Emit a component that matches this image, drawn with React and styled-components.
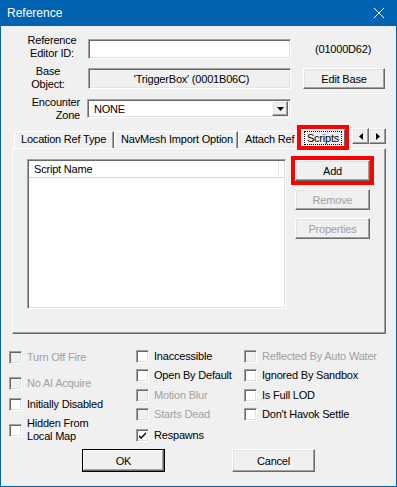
import React from 'react'
import styled, { createGlobalStyle } from 'styled-components'

const GlobalStyle = createGlobalStyle`
    html, body { margin: 0; padding: 0; background: #f0f0f0; }
    * { box-sizing: border-box; }
`

const BLUE = '#0063b1'

const Window = styled.div`
    width: 397px;
    height: 487px;
    display: flex;
    flex-direction: column;
    background: #f0f0f0;
    font-family: "Liberation Sans", Arial, sans-serif;
    font-size: 11px;
    letter-spacing: -0.2px;
    color: #000;
`

const TitleBar = styled.div`
    height: 26px;
    flex: none;
    background: ${ BLUE };
    color: #fff;
    display: flex;
    align-items: center;
    justify-content: space-between;
    padding: 0 13px 0 7px;
    font-size: 12px;
    letter-spacing: 0;
`

const Body = styled.div`
    flex: 1;
    display: flex;
    flex-direction: column;
    border: 1px solid ${ BLUE };
    border-top: 0;
    padding-top: 8px;
`

const FieldRow = styled.div`
    display: flex;
    align-items: flex-start;
    height: 26px;
    margin-top: ${ p => p.$gap || 0 }px;
`

const FieldLabel = styled.div`
    width: 64px;
    margin-left: ${ p => p.$left }px;
    text-align: ${ p => p.$align };
    line-height: 13px;
    white-space: pre-line;
`

const sunken = `
    border: 1px solid;
    border-color: #a0a0a0 #fff #fff #a0a0a0;
    box-shadow: inset 1px 1px #696969, inset -1px -1px #e3e3e3;
`

const raised = `
    border: 1px solid;
    border-color: #fff #696969 #696969 #fff;
    box-shadow: inset -1px -1px #a0a0a0, inset 1px 1px #e3e3e3;
    background: #f0f0f0;
`

const TextBox = styled.div`
    ${ sunken }
    width: ${ p => p.$w }px;
    height: ${ p => p.$h }px;
    margin-left: ${ p => p.$left }px;
    margin-top: ${ p => p.$top }px;
    background: ${ p => p.$disabled ? '#f0f0f0' : '#fff' };
    display: flex;
    align-items: center;
    justify-content: ${ p => p.$center ? 'center' : 'space-between' };
    padding: 0 2px 0 6px;
`

const IdText = styled.div`
    margin-left: 24px;
    margin-top: 5px;
    line-height: 20px;
`

const Button = styled.button`
    ${ raised }
    ${ p => p.$default && `
        border-color: #000;
        box-shadow: inset -1px -1px #696969, inset 1px 1px #fff, inset -2px -2px #a0a0a0;
    ` }
    width: ${ p => p.$w }px;
    height: ${ p => p.$h }px;
    margin-left: ${ p => p.$left || 0 }px;
    margin-top: ${ p => p.$top || 0 }px;
    padding: 0;
    font: inherit;
    letter-spacing: inherit;
    color: ${ p => p.disabled ? '#a0a0a0' : '#000' };
    flex: none;
`

const DropButton = styled.div`
    ${ raised }
    width: 16px;
    height: 15px;
    display: flex;
    align-items: center;
    justify-content: center;
`

const TabStrip = styled.div`
    display: flex;
    align-items: flex-end;
    height: 23px;
    margin-top: 3px;
    margin-left: 13px;
`

const Tab = styled.div`
    width: ${ p => p.$w }px;
    height: 17px;
    padding-left: 6px;
    border-top: 1px solid #fff;
    border-left: 1px solid #fff;
    border-right: ${ p => p.$clipped ? '0' : '1px solid #696969' };
    box-shadow: ${ p => p.$clipped ? 'none' : 'inset -1px 0 #a0a0a0' };
    line-height: 15px;
    white-space: nowrap;
    overflow: hidden;
`

const RedFrame = styled.div`
    border: 4px solid #f00;
    flex: none;
`

const ScriptsFrame = styled(RedFrame)`
    position: relative;
    z-index: 1;
    width: 52px;
    height: 25px;
    margin-bottom: -2px;
`

const ActiveTab = styled.div`
    height: 17px;
    background: #f0f0f0;
    border-top: 1px solid #fff;
    border-left: 1px solid #fff;
    border-right: 1px solid #696969;
    display: flex;
    justify-content: center;
    padding-top: 1px;
`

const FocusText = styled.span`
    border: 1px dotted #000;
    padding: 0 2px;
    line-height: 12px;
    height: 14px;
`

const Arrows = styled.div`
    display: flex;
    align-self: flex-start;
    margin-top: 3px;
    margin-left: 3px;
`

const ArrowButton = styled.div`
    ${ raised }
    width: 17px;
    height: 16px;
    display: flex;
    align-items: center;
    justify-content: center;
`

const Panel = styled.div`
    width: 374px;
    height: 186px;
    margin-left: 11px;
    border: 1px solid;
    border-color: #fff #696969 #696969 #fff;
    box-shadow: inset -1px -1px #a0a0a0;
    display: flex;
    align-items: flex-start;
`

const ListView = styled.div`
    ${ sunken }
    width: 259px;
    height: 150px;
    margin-left: 14px;
    margin-top: 10px;
    padding: 1px 1px 0 1px;
    background: #fff;
`

const ListHeader = styled.div`
    display: flex;
    height: 17px;
    border-bottom: 1px solid #d5d5d5;
`

const HeaderCell = styled.div`
    width: ${ p => p.$w }px;
    padding-left: 5px;
    line-height: 16px;
    border-right: 1px solid #e5e5e5;
`

const ButtonColumn = styled.div`
    width: 83px;
    margin-left: 5px;
    margin-top: 7px;
    display: flex;
    flex-direction: column;
    align-items: center;
`

const Checks = styled.div`
    display: flex;
    align-items: flex-start;
    margin-top: 16px;
`

const CheckColumn = styled.div`
    display: flex;
    flex-direction: column;
    width: ${ p => p.$w }px;
    margin-left: ${ p => p.$left || 0 }px;
    margin-top: ${ p => p.$top || 0 }px;
`

const CheckItem = styled.div`
    display: flex;
    align-items: center;
    margin-top: ${ p => p.$top }px;
    color: ${ p => p.$disabled ? '#a0a0a0' : '#000' };
`

const Box = styled.span`
    ${ sunken }
    width: 13px;
    height: 13px;
    flex: none;
    margin-right: 5px;
    background: ${ p => p.$disabled ? '#f0f0f0' : '#fff' };
    display: flex;
    align-items: center;
    justify-content: center;
`

const CheckLabel = styled.span`
    line-height: 13px;
    white-space: pre-line;
`

const Footer = styled.div`
    display: flex;
    gap: 67px;
    padding-left: 81px;
    margin-top: 6px;
`

const Check = ({ label, top = 0, disabled, checked }) => (
    <CheckItem $top={ top } $disabled={ disabled }>
        <Box $disabled={ disabled }>
            { checked && (
                <svg width="9" height="9" viewBox="0 0 9 9">
                    <path d="M1 4 L3 6 L8 1 L8 3 L3 8 L1 6 Z" fill="#000" />
                </svg>
            ) }
        </Box>
        <CheckLabel>{ label }</CheckLabel>
    </CheckItem>
)

const Triangle = ({ dir }) => {
    const pts = {
        down: '0,0 7,0 3.5,4',
        left: '4,0 4,7 0,3.5',
        right: '0,0 0,7 4,3.5',
    }[dir]
    const w = dir === 'down' ? 7 : 4
    const h = dir === 'down' ? 4 : 7
    return (
        <svg width={ w } height={ h } viewBox={ `0 0 ${ w } ${ h }` }>
            <polygon points={ pts } fill="#000" />
        </svg>
    )
}

const columnOne = [
    { label: 'Turn Off Fire', top: 0, disabled: true },
    { label: 'No AI Acquire', top: 13, disabled: true },
    { label: 'Initially Disabled', top: 8 },
    { label: 'Hidden From\nLocal Map', top: 6 },
]

const columnTwo = [
    { label: 'Inaccessible', top: 0 },
    { label: 'Open By Default', top: 6 },
    { label: 'Motion Blur', top: 7, disabled: true },
    { label: 'Starts Dead', top: 6, disabled: true },
    { label: 'Respawns', top: 8, checked: true },
]

const columnThree = [
    { label: 'Reflected By Auto Water', top: 0, disabled: true },
    { label: 'Ignored By Sandbox', top: 6 },
    { label: 'Is Full LOD', top: 7 },
    { label: "Don't Havok Settle", top: 6 },
]

const App = () => (
    <Window>
        <GlobalStyle />
        <TitleBar>
            <span>Reference</span>
            <svg width="10" height="10" viewBox="0 0 10 10">
                <path d="M0 0 L10 10 M10 0 L0 10" stroke="#fff" strokeWidth="1" />
            </svg>
        </TitleBar>

        <Body>
            <FieldRow>
                <FieldLabel $left={ 19 } $align="center">{ 'Reference\nEditor ID:' }</FieldLabel>
                <TextBox $w={ 203 } $h={ 20 } $left={ 4 } $top={ 5 } />
                <IdText>(01000D62)</IdText>
            </FieldRow>

            <FieldRow $gap={ 5 }>
                <FieldLabel $left={ 15 } $align="center">{ 'Base\nObject:' }</FieldLabel>
                <TextBox $w={ 203 } $h={ 21 } $left={ 8 } $top={ 3 } $disabled $center>
                    'TriggerBox' (0001B06C)
                </TextBox>
                <Button $w={ 82 } $h={ 21 } $left={ 12 } $top={ 3 }>Edit Base</Button>
            </FieldRow>

            <FieldRow $gap={ 5 }>
                <FieldLabel $left={ 15 } $align="right">{ 'Encounter\nZone' }</FieldLabel>
                <TextBox $w={ 204 } $h={ 19 } $left={ 7 } $top={ 3 }>
                    <span>NONE</span>
                    <DropButton><Triangle dir="down" /></DropButton>
                </TextBox>
            </FieldRow>

            <TabStrip>
                <Tab $w={ 100 }>Location Ref Type</Tab>
                <Tab $w={ 124 }>NavMesh Import Option</Tab>
                <Tab $w={ 59 } $clipped>Attach Ref</Tab>
                <ScriptsFrame>
                    <ActiveTab><FocusText>Scripts</FocusText></ActiveTab>
                </ScriptsFrame>
                <Arrows>
                    <ArrowButton><Triangle dir="left" /></ArrowButton>
                    <ArrowButton><Triangle dir="right" /></ArrowButton>
                </Arrows>
            </TabStrip>

            <Panel>
                <ListView>
                    <ListHeader>
                        <HeaderCell $w={ 250 }>Script Name</HeaderCell>
                    </ListHeader>
                </ListView>
                <ButtonColumn>
                    <RedFrame>
                        <Button $w={ 75 } $h={ 21 }>Add</Button>
                    </RedFrame>
                    <Button $w={ 75 } $h={ 21 } $top={ 4 } disabled>Remove</Button>
                    <Button $w={ 75 } $h={ 21 } $top={ 8 } disabled>Properties</Button>
                </ButtonColumn>
            </Panel>

            <Checks>
                <CheckColumn $w={ 127 } $left={ 8 } $top={ 1 }>
                    { columnOne.map(c => <Check key={ c.label } { ...c } />) }
                </CheckColumn>
                <CheckColumn $w={ 108 }>
                    { columnTwo.map(c => <Check key={ c.label } { ...c } />) }
                </CheckColumn>
                <CheckColumn $w={ 150 }>
                    { columnThree.map(c => <Check key={ c.label } { ...c } />) }
                </CheckColumn>
            </Checks>

            <Footer>
                <Button $w={ 83 } $h={ 23 } $default>OK</Button>
                <Button $w={ 83 } $h={ 23 }>Cancel</Button>
            </Footer>
        </Body>
    </Window>
)

export default App
